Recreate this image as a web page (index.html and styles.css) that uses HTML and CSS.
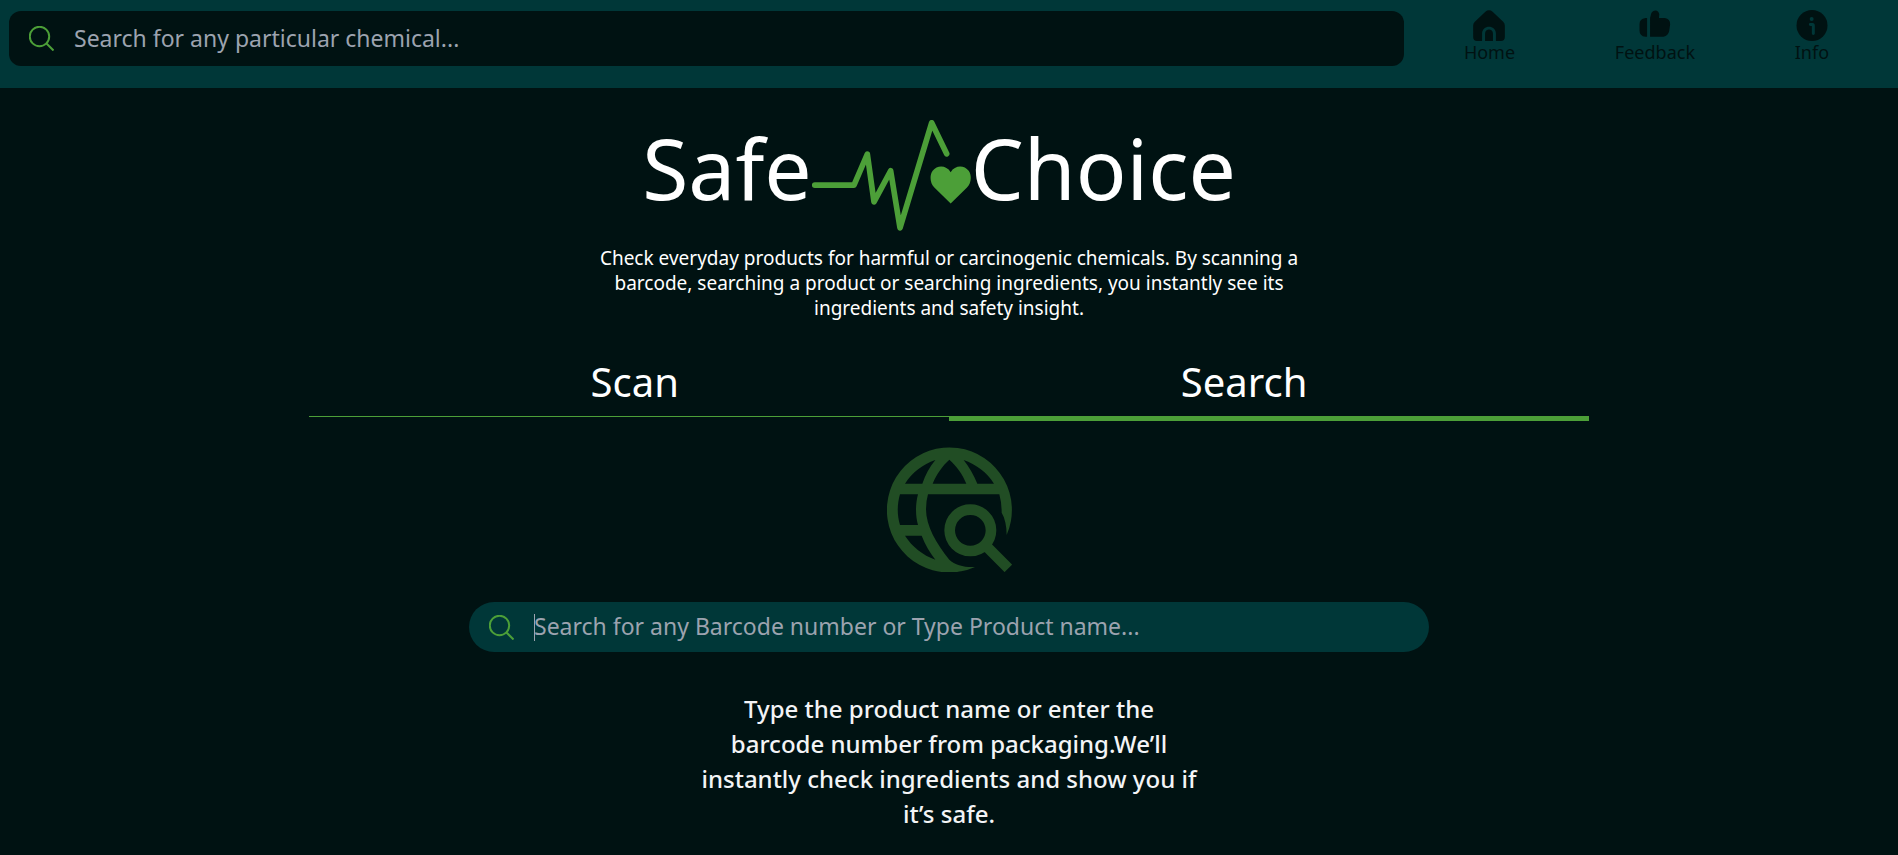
FILE: index.html
```html
<!DOCTYPE html>
<html lang="en">
<head>
<meta charset="utf-8">
<meta name="viewport" content="width=device-width, initial-scale=1">
<title>Safe Choice</title>
<link rel="stylesheet" href="styles.css">
</head>
<body>
<header class="topbar">
  <form class="search search-top" role="search">
    <svg class="search-icon" viewBox="0 0 25 25" aria-hidden="true"><circle cx="10.5" cy="10.5" r="9.7"/><path d="M17.5 17.5 24.5 24.5"/></svg>
    <input class="search-input" type="search" aria-label="Search chemicals" placeholder="Search for any particular chemical...">
  </form>
  <nav class="nav">
    <a class="nav-link" href="#home">
      <svg class="nav-icon" viewBox="0 0 96 94" aria-hidden="true"><path d="M37 5Q48-4 59 5L91 36Q96 41 96 47V82Q96 94 84 94H69V72C69 44 27 44 27 72V94H12Q0 94 0 82V47Q0 41 5 36Z"/><path d="M36 94V72C36 55 60 55 60 72V94Z"/></svg>
      Home
    </a>
    <a class="nav-link" href="#feedback">
      <svg class="nav-icon" viewBox="0 0 96 94" aria-hidden="true"><path d="M24 24V81H19Q1 79 1 62V43Q1 26 19 24ZM33 81V24C36 16 35 8 42 4C51-3 61 5 61 13L60 24H78Q94 26 94 43L91 64Q88 79 74 81Z"/></svg>
      Feedback
    </a>
    <a class="nav-link" href="#info">
      <svg class="nav-icon" viewBox="0 0 96 94" aria-hidden="true"><circle cx="48" cy="47" r="47"/><circle class="cut-dot" cx="47" cy="27" r="6"/><path class="cut-line" d="M43 44H50Q52 44 52 48V71"/></svg>
      Info
    </a>
  </nav>
</header>
<main class="main">
  <h1 class="logo">
    <span>Safe</span>
    <svg class="pulse" viewBox="576 59 477 332" aria-hidden="true"><path class="pulse-line" d="M584 254H702L742 161 762 304 812 211 840 382 935 67 980 160"/><path class="heart" d="M992 309 943 261C930 248 928 225 938 211C952 193 979 194 992 215C1005 194 1032 193 1046 211C1056 225 1054 248 1041 261Z"/></svg>
    <span>Choice</span>
  </h1>
  <p class="intro">Check everyday products for harmful or carcinogenic chemicals. By scanning a barcode, searching a product or searching ingredients, you instantly see its ingredients and safety insight.</p>
  <div class="tabs">
    <div class="tab-row" role="tablist">
      <button class="tab" type="button" role="tab" aria-selected="false">Scan</button>
      <button class="tab" type="button" role="tab" aria-selected="true">Search</button>
    </div>
    <div class="tab-lines">
      <span class="tab-line"></span>
      <span class="tab-line tab-line-active"></span>
    </div>
  </div>
  <svg class="globe" viewBox="51 38 375 375" aria-hidden="true">
    <path fill-rule="evenodd" d="M410 302A187.5 187.5 0 1 0 315 398C285 400 255 392 238 376C200 330 168 275 168 225Q168 200 174 180H388Q395 205 395 235C405 252 410 275 410 302ZM105 148C127 114 158 90 196 77C178 98 166 122 157 148ZM188 148C199 120 217 95 238 76C260 95 278 121 289 148ZM322 148C311 122 298 98 281 77C318 90 351 114 372 148ZM90 180H144C136 210 136 243 144 272H90C81 243 81 210 90 180ZM105 304H155C165 330 180 355 196 376C158 362 127 338 105 304Z"/>
    <path class="globe-lens" d="M363 288A62 62 0 1 1 239 288A62 62 0 1 1 363 288M346 333 415 402"/>
  </svg>
  <form class="search search-main" role="search">
    <svg class="search-icon" viewBox="0 0 25 25" aria-hidden="true"><circle cx="10.5" cy="10.5" r="9.7"/><path d="M17.5 17.5 24.5 24.5"/></svg>
    <span class="caret"></span>
    <input class="search-input" type="search" aria-label="Search products" placeholder="Search for any Barcode number or Type Product name...">
  </form>
  <p class="hint">Type the product name or enter the barcode number from packaging.We’ll instantly check ingredients and show you if it’s safe.</p>
</main>
</body>
</html>
```
FILE: styles.css
```css
* { box-sizing: border-box; }

body {
  margin: 0;
  background: #001212;
  color: #fff;
  font-family: "Noto Sans", "Open Sans", sans-serif;
}

.topbar {
  display: grid;
  grid-template-columns: 3fr 1fr;
  align-items: start;
  gap: 10px;
  height: 88px;
  padding: 10px 19px 0 9px;
  background: #003738;
}

.search {
  display: flex;
  align-items: center;
  gap: 20px;
  padding: 0 20px;
}

.search-top {
  height: 55px;
  margin-top: 1px;
  border-radius: 12px;
  background: #001212;
}

.search-main {
  position: relative;
  width: 100%;
  max-width: 960px;
  height: 50px;
  margin-top: 30px;
  border-radius: 25px;
  background: #003738;
}

.search-icon {
  flex: none;
  width: 25px;
  height: 25px;
  fill: none;
  stroke: #4c9f38;
  stroke-width: 2;
}

.search-input {
  flex: 1;
  min-width: 0;
  padding: 0 0 2px;
  border: 0;
  outline: 0;
  background: transparent;
  color: #fff;
  font: inherit;
  font-size: 23px;
}

.search-input::placeholder { color: #9ca3af; opacity: 1; }

.caret {
  position: absolute;
  left: 65px;
  width: 1px;
  height: 27px;
  background: #9ca3af;
}

.nav {
  display: flex;
  justify-content: space-around;
}

.nav-link {
  display: flex;
  flex-direction: column;
  align-items: center;
  color: #001212;
  font-size: 18px;
  line-height: 23px;
  text-decoration: none;
}

.nav-icon { width: 32px; height: 31px; fill: #001212; }
.cut-dot { fill: #003738; }
.cut-line { fill: none; stroke: #003738; stroke-width: 9; stroke-linecap: round; }

.main {
  display: flex;
  flex-direction: column;
  align-items: center;
}

.logo {
  display: flex;
  align-items: flex-start;
  margin: 32px 0 0;
  padding-right: 20px;
  font-size: 84px;
  font-weight: 400;
  line-height: 96px;
}

.pulse { width: 159px; height: 111px; }
.pulse-line {
  fill: none;
  stroke: #4c9f38;
  stroke-width: 17;
  stroke-linecap: round;
  stroke-linejoin: round;
}
.heart { fill: #4c9f38; }

.intro {
  max-width: 720px;
  margin: 15px 0 0;
  font-size: 19px;
  line-height: 25px;
  text-align: center;
}

.tabs {
  width: 100%;
  max-width: 1280px;
  margin-top: 33px;
}

.tab-row {
  display: flex;
  justify-content: space-between;
  padding: 0 22% 6px;
}

.tab {
  padding: 0;
  border: 0;
  background: transparent;
  color: #fff;
  font: inherit;
  font-size: 40px;
  line-height: 56px;
}

.tab-lines {
  display: grid;
  grid-template-columns: 1fr 1fr;
  align-items: start;
}

.tab-line { height: 1px; background: #4c9f38; }
.tab-line-active { height: 5px; }

.globe {
  width: 125px;
  height: 125px;
  margin-top: 26px;
  fill: #214d24;
}
.globe-lens { fill: none; stroke: #214d24; stroke-width: 32; }

.hint {
  max-width: 500px;
  margin: 39px 0 0;
  color: #f3f4f6;
  font-size: 24px;
  font-weight: 500;
  line-height: 35px;
  text-align: center;
}
```
